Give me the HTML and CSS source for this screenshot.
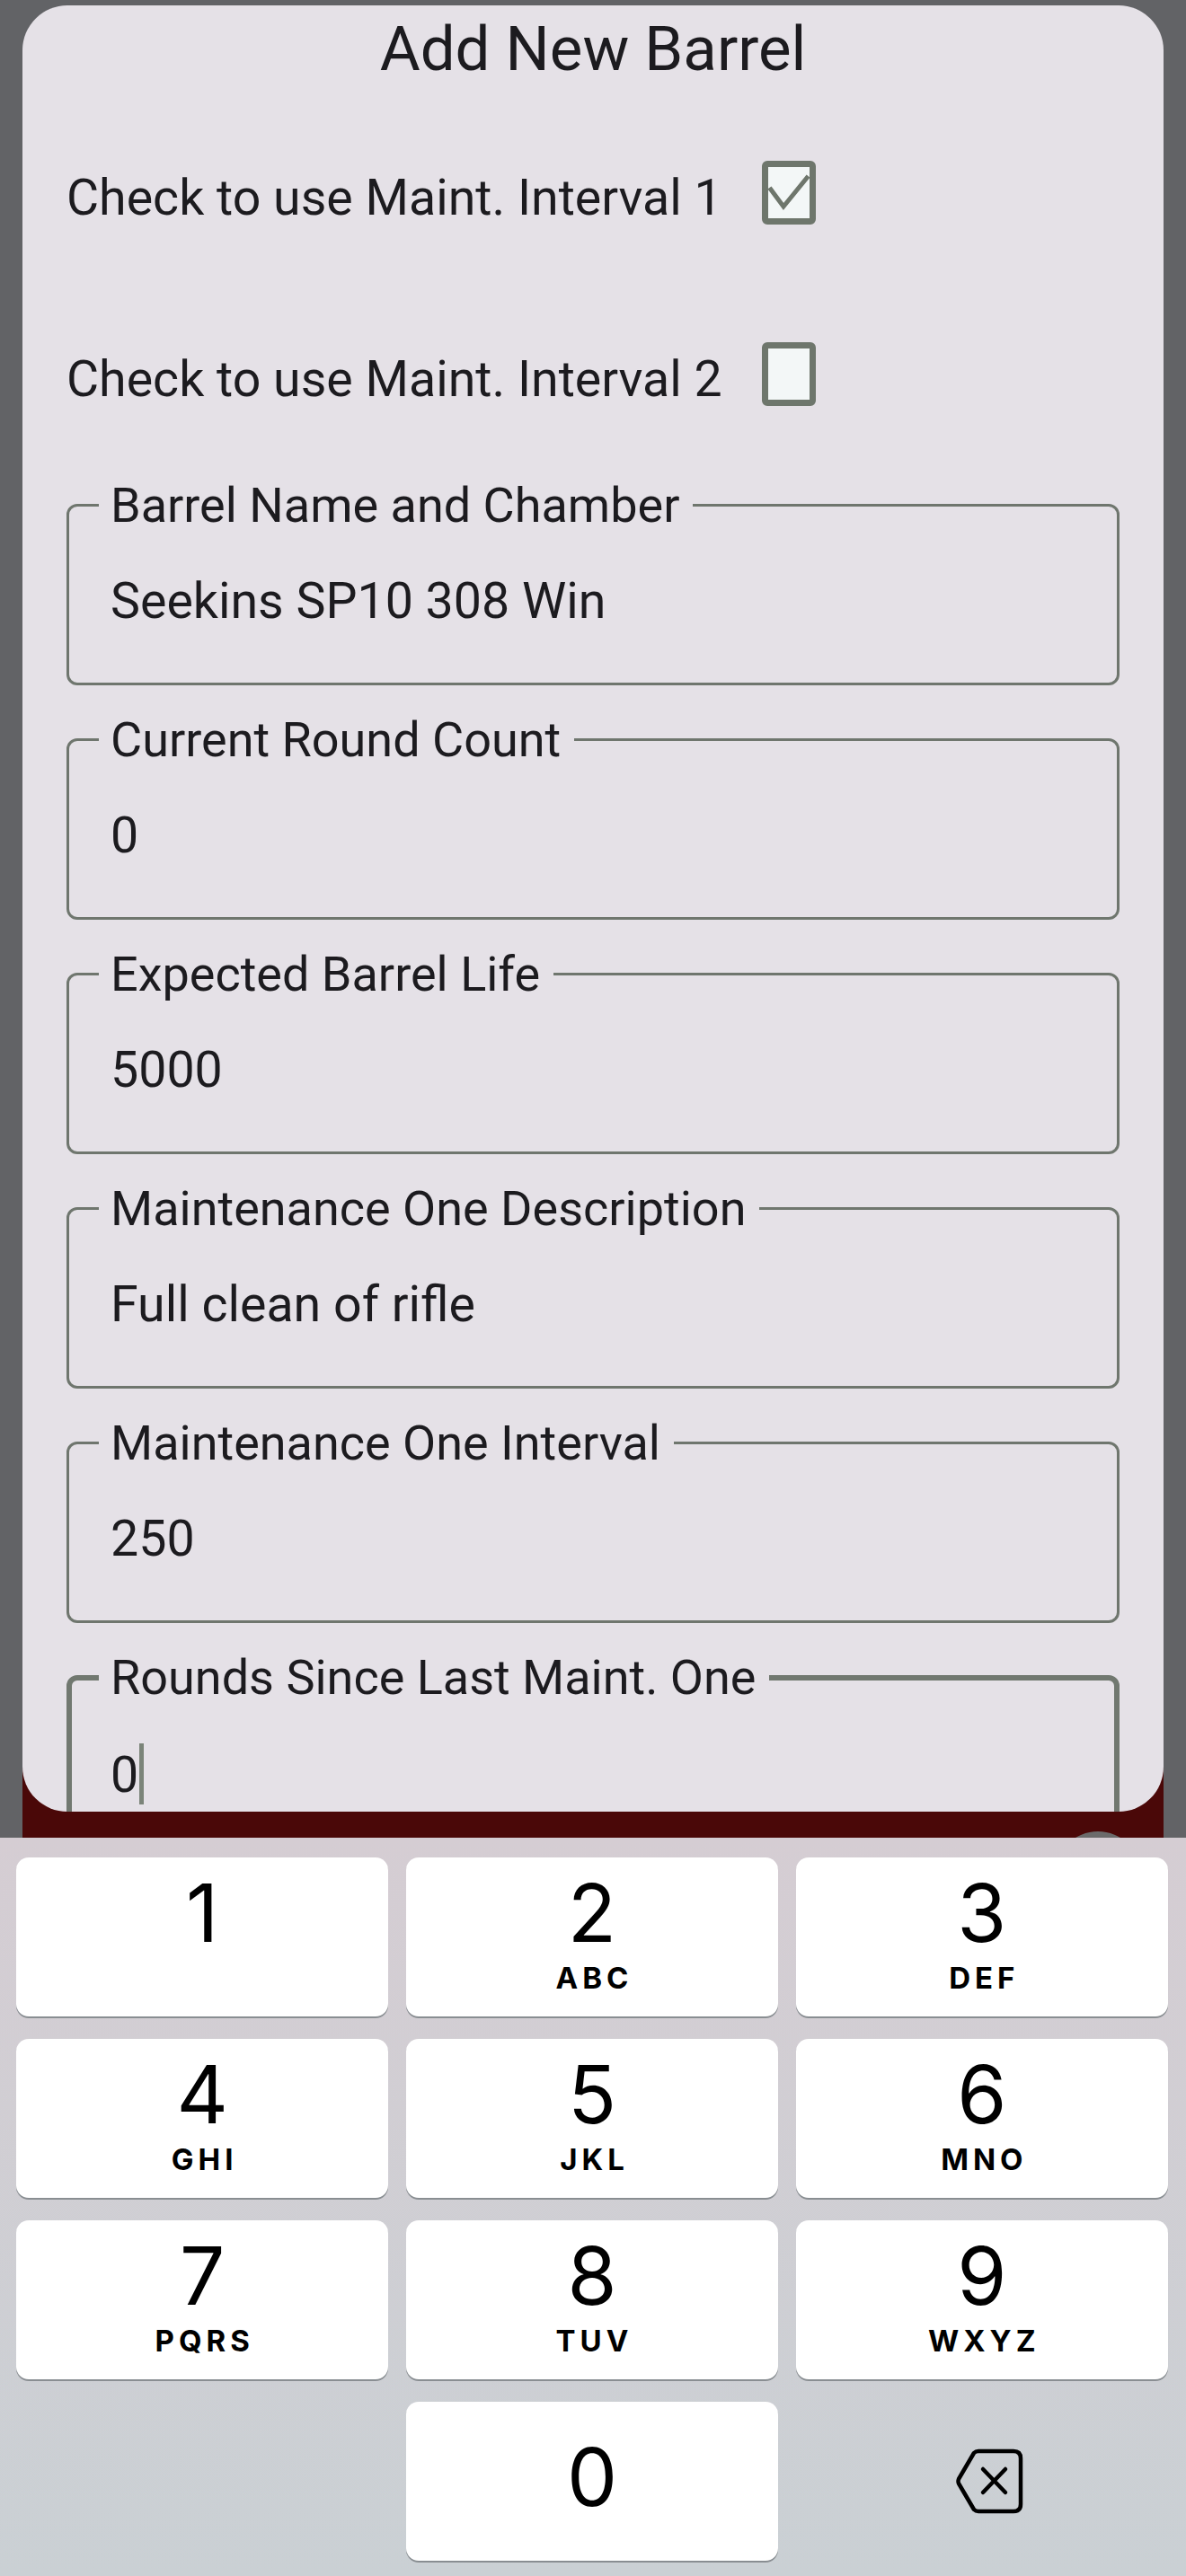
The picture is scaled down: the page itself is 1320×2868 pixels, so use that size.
FILE: index.html
```html
<!DOCTYPE html>
<html>
<head>
    <title>Add New Barrel</title>
    <meta charset="UTF-8">
    <link rel="stylesheet" href="styles.css">
</head>
<body>

<div class="screen">
    <div class="sheet">
        <div class="card">
            <h1 class="title">Add New Barrel</h1>

            <div class="check-row first">
                <span class="check-label">Check to use Maint. Interval 1</span>
                <span class="checkbox">
                    <svg width="46" height="57" viewBox="0 0 46 57"><polyline points="3,25 17,44 43,12" fill="none" stroke="#6e766c" stroke-width="5" stroke-linecap="square"/></svg>
                </span>
            </div>

            <div class="check-row second">
                <span class="check-label">Check to use Maint. Interval 2</span>
                <span class="checkbox"></span>
            </div>

            <fieldset class="field">
                <legend>Barrel Name and Chamber</legend>
                <div class="value">Seekins SP10 308 Win</div>
            </fieldset>

            <fieldset class="field">
                <legend>Current Round Count</legend>
                <div class="value">0</div>
            </fieldset>

            <fieldset class="field">
                <legend>Expected Barrel Life</legend>
                <div class="value">5000</div>
            </fieldset>

            <fieldset class="field">
                <legend>Maintenance One Description</legend>
                <div class="value">Full clean of rifle</div>
            </fieldset>

            <fieldset class="field">
                <legend>Maintenance One Interval</legend>
                <div class="value">250</div>
            </fieldset>

            <fieldset class="field focused">
                <legend>Rounds Since Last Maint. One</legend>
                <div class="value">0<span class="caret"></span></div>
            </fieldset>
        </div>
        <!-- floating button behind the keyboard -->
        <div class="fab"></div>
    </div>

    <div class="keyboard">
        <div class="key"><span class="digit">1</span></div>
        <div class="key"><span class="digit">2</span><span class="letters">ABC</span></div>
        <div class="key"><span class="digit">3</span><span class="letters">DEF</span></div>
        <div class="key"><span class="digit">4</span><span class="letters">GHI</span></div>
        <div class="key"><span class="digit">5</span><span class="letters">JKL</span></div>
        <div class="key"><span class="digit">6</span><span class="letters">MNO</span></div>
        <div class="key"><span class="digit">7</span><span class="letters">PQRS</span></div>
        <div class="key"><span class="digit">8</span><span class="letters">TUV</span></div>
        <div class="key"><span class="digit">9</span><span class="letters">WXYZ</span></div>
        <div class="blank"></div>
        <div class="key zero"><span class="digit">0</span></div>
        <div class="delete">
            <svg width="78" height="76" viewBox="0 0 78 76">
                <path d="M26 4 H65 Q73 4 73 12 V63 Q73 71 65 71 H26 Q23 71 21 69 L4 40 Q3 37.5 4 35 L21 6 Q23 4 26 4 Z" fill="none" stroke="#000" stroke-width="4.5" stroke-linejoin="round"/>
                <path d="M31 24 L56 50 M56 24 L31 50" fill="none" stroke="#000" stroke-width="4.5" stroke-linecap="round"/>
            </svg>
        </div>
    </div>
</div>

</body>
</html>
```

FILE: styles.css
```css
* {
    box-sizing: border-box;
}

html,
body {
    margin: 0;
}

body {
    width: 1320px;
    height: 2868px;
    overflow: hidden;
    background-color: #626366;
    font-family: Roboto, "Noto Sans", sans-serif;
    color: #1c1b1f;
}

.screen {
    padding-top: 6px;
}

.sheet {
    position: relative;
    width: 1270px;
    height: 2040px;
    margin-left: 25px;
    overflow: hidden;
    background: linear-gradient(to bottom, transparent 1950px, #4a0808 1950px);
}

.card {
    height: 2011px;
    padding: 8px 49px 0;
    background-color: #e5e1e7;
    border-radius: 50px;
    overflow: hidden;
}

.title {
    margin: 0;
    font-size: 69px;
    font-weight: 400;
    line-height: normal;
    text-align: center;
}

.check-row {
    display: flex;
    align-items: flex-start;
    height: 72px;
}

.check-row.first {
    margin-top: 84px;
}

.check-row.second {
    margin-top: 130px;
}

.check-label {
    margin-top: 9px;
    font-size: 55.5px;
    line-height: normal;
}

.checkbox {
    width: 60px;
    height: 71px;
    margin-left: 44px;
    border: 7px solid #6e766c;
    border-radius: 6px;
    background-color: #f3f7f7;
}

.checkbox svg {
    display: block;
}

/* outlined entry with the label in the border */
.field {
    margin: 29px 0 0;
    padding: 44px 0 59px 33px;
    min-width: 0;
    border: 3px solid #6f766e;
    border-radius: 12px;
}

.check-row + .field {
    margin-top: 78px;
}

.field legend {
    padding: 0 15px 0 13px;
    font-size: 54px;
    line-height: 63px;
}

.field .value {
    padding-left: 13px;
    font-size: 55.5px;
    line-height: 63px;
}

.field.focused {
    padding: 42px 0 58px 30px;
    border-width: 6px;
    border-color: #717870;
}

.caret {
    display: inline-block;
    width: 5px;
    height: 68px;
    margin-left: 1px;
    vertical-align: -14px;
    background-color: #7b8479;
}

.fab {
    position: absolute;
    left: 1149px;
    top: 2033px;
    width: 96px;
    height: 96px;
    border-radius: 50%;
    background-color: #6b6b6b;
}

/* number pad */
.keyboard {
    display: grid;
    grid-template-columns: repeat(3, 1fr);
    grid-auto-rows: 177px;
    gap: 25px 19.5px;
    height: 822px;
    padding: 22px 20px 0 18px;
    background: linear-gradient(to bottom, #d5cdd3, #cad0d4);
    font-family: Inter, "Liberation Sans", sans-serif;
    color: #000;
}

.key {
    display: flex;
    flex-direction: column;
    align-items: center;
    padding-top: 17px;
    background-color: #fff;
    border-radius: 14px;
    box-shadow: 0 2px 0 #898e92;
}

.key.zero {
    padding-top: 39px;
}

.digit {
    font-size: 89px;
    line-height: 1;
}

.letters {
    margin-top: 12px;
    padding-left: 5px;
    font-size: 33px;
    font-weight: 700;
    line-height: 1;
    letter-spacing: 5px;
}

.delete {
    display: flex;
    align-items: center;
    justify-content: center;
    padding-left: 18px;
}
```
